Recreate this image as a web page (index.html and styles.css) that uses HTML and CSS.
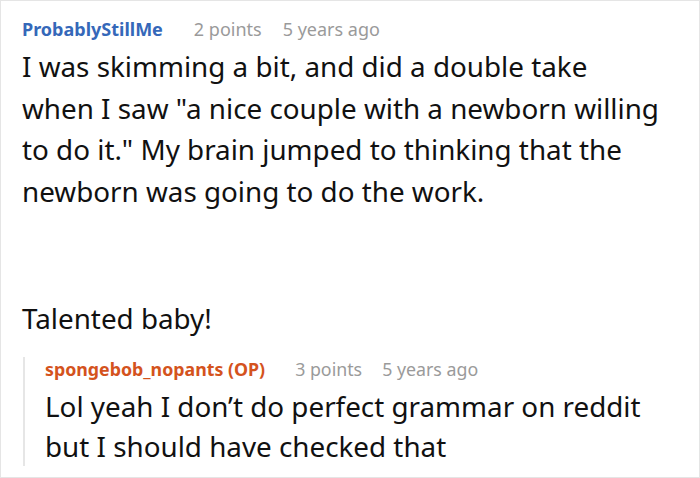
FILE: index.html
```html
<!DOCTYPE html>
<html>
<head>
<meta charset="utf-8">
<link rel="stylesheet" href="styles.css">
</head>
<body>
<div class="comment">
  <div class="head">
    <span class="author">ProbablyStillMe</span>
    <span class="meta">2 points</span>
    <span class="meta">5 years ago</span>
  </div>
  <div class="body">
    <p>I was skimming a bit, and did a double take when I saw "a nice couple with a newborn willing to do it." My brain jumped to thinking that the newborn was going to do the work.</p>
    <p class="gap">Talented baby!</p>
  </div>
  <div class="reply">
    <div class="head reply-head">
      <span class="author op">spongebob_nopants (OP)</span>
      <span class="meta">3 points</span>
      <span class="meta">5 years ago</span>
    </div>
    <div class="body reply-body">
      <p>Lol yeah I don’t do perfect grammar on reddit but I should have checked that</p>
    </div>
  </div>
</div>
</body>
</html>
```

FILE: styles.css
```css
html, body {
  margin: 0;
  padding: 0;
  background: #fff;
}
.comment {
  box-sizing: border-box;
  width: 700px;
  height: 478px;
  border: 1px solid #e5e5e5;
  padding: 16px 36px 0 21px;
  font-family: "Noto Sans", "Open Sans", sans-serif;
  color: #111;
  overflow: hidden;
}
.head {
  display: flex;
  align-items: baseline;
  gap: 21px;
  font-size: 18px;
  line-height: 24px;
}
.author {
  font-weight: 700;
  color: #3568b9;
  margin-right: 10px;
}
.author.op {
  color: #d4531d;
}
.meta {
  color: #9a9a9a;
}
.reply-head {
  font-size: 17.8px;
  gap: 20px;
  margin-top: -11px;
}
.body {
  margin-top: 5px;
  font-size: 27.8px;
  line-height: 41.5px;
}
.body p {
  margin: 0;
}
.body p.gap {
  margin-top: 86px;
}
.reply {
  margin-top: 28px;
  margin-left: 1px;
  border-left: 2px solid #e6e6e6;
  padding-left: 20px;
}
.reply-body {
  margin-top: 5px;
  line-height: 40px;
  margin-bottom: -6px;
}
```
